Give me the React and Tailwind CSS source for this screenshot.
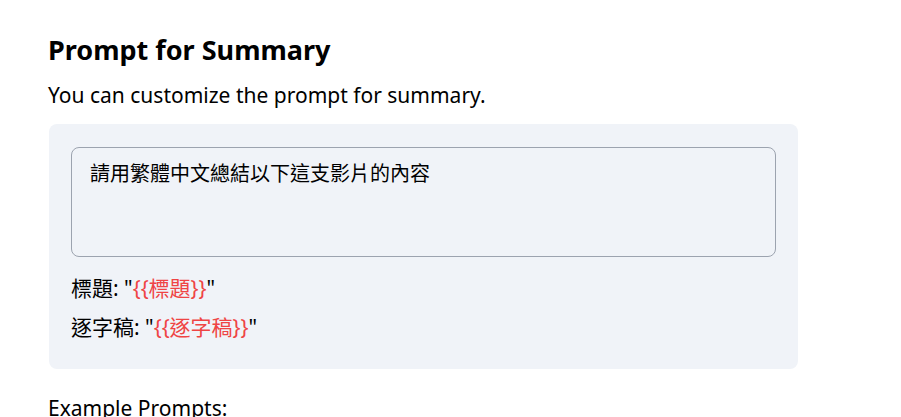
export default function App() {
  const font = { fontFamily: '"Noto Sans", "Noto Sans CJK TC", sans-serif' };
  return (
    <div className="min-h-screen bg-white text-black" style={font}>
      <div className="pl-12 pt-[33px] w-[798px]">
        <h2 className="text-[27px] font-bold leading-[34px]">Prompt for Summary</h2>
        <p className="mt-[14px] text-[21px] leading-[28px]">You can customize the prompt for summary.</p>
        <div className="mt-[15px] ml-px rounded-lg bg-[#f0f3f8] px-[22px] pt-[23px] pb-[22px]">
          <textarea
            className="block w-full h-[110px] resize-none rounded-lg border border-[#9ca3af] bg-transparent px-[18px] py-[12px] text-[20px] leading-[28px] outline-none"
            style={font}
            defaultValue="請用繁體中文總結以下這支影片的內容"
          />
          <div className="mt-[12px] text-[21px] leading-[39px]">
            <p>
              標題: "<span className="text-[#ef4444]">{'{{標題}}'}</span>"
            </p>
            <p>
              逐字稿: "<span className="text-[#ef4444]">{'{{逐字稿}}'}</span>"
            </p>
          </div>
        </div>
        <p className="mt-[25px] text-[21px] leading-[28px]">Example Prompts:</p>
      </div>
    </div>
  );
}
